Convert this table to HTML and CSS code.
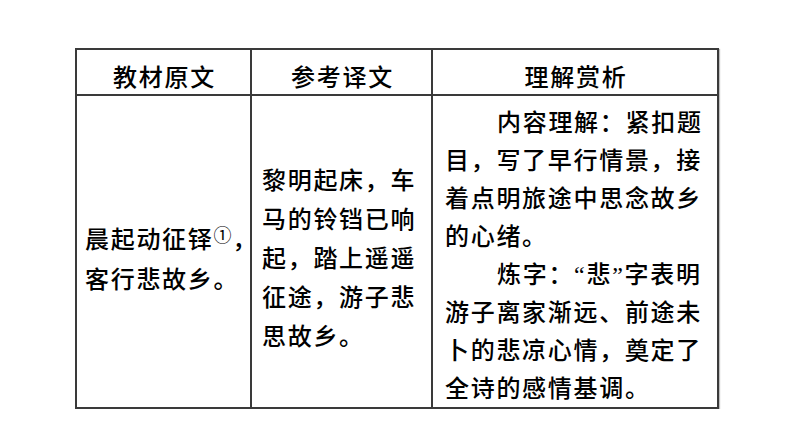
FILE: index.html
```html
<!DOCTYPE html>
<html lang="zh-CN">
<head>
<meta charset="utf-8">
<title>晨起动征铎</title>
<link rel="stylesheet" href="styles.css">
</head>
<body>
<div class="sheet">
  <div class="cell head">教材原文</div>
  <div class="cell head">参考译文</div>
  <div class="cell head">理解赏析</div>
  <div class="cell body c1"><p class="para">晨起动征铎<span class="note">①</span>，<br>客行悲故乡。</p></div>
  <div class="cell body c2"><p class="para">黎明起床，车<br>马的铃铛已响<br>起，踏上遥遥<br>征途，游子悲<br>思故乡。</p></div>
  <div class="cell body c3">
    <p class="para"><span class="ind">内容理解：紧扣题</span><br>目，写了早行情景，接<br>着点明旅途中思念故乡<br>的心绪。</p>
    <p class="para"><span class="ind">炼字：“悲”字表明</span><br>游子离家渐远、前途未<br>卜的悲凉心情，奠定了<br>全诗的感情基调。</p>
  </div>
</div>
</body>
</html>
```
FILE: styles.css
```css
html, body {
  margin: 0;
  padding: 0;
  background: #ffffff;
}

body {
  font-family: "Liberation Serif", "Noto Sans CJK SC", sans-serif;
  color: #000000;
}

.sheet {
  display: grid;
  grid-template-columns: 175px 181px 286px;
  grid-template-rows: 46px 313px;
  width: max-content;
  margin: 48px 0 0 75px;
  border-left: 2px solid #3a3a3a;
  border-top: 2px solid #3a3a3a;
  box-shadow: 1px 1px 1px rgba(0, 0, 0, 0.25);
}

.cell {
  box-sizing: border-box;
  border-right: 2px solid #3a3a3a;
  border-bottom: 2px solid #3a3a3a;
  font-size: 24px;
  font-weight: 500;
  letter-spacing: 1.7px;
  white-space: nowrap;
}

.head {
  display: flex;
  justify-content: center;
  align-items: center;
  padding-top: 11px;
  padding-left: 2px;
  line-height: 30px;
}

.body {
  display: flex;
  flex-direction: column;
  justify-content: center;
  padding-top: 16px;
}

.c1 {
  padding-left: 8px;
  line-height: 40px;
}

.c2 {
  padding-left: 10px;
  line-height: 39px;
}

.c3 {
  justify-content: flex-start;
  padding-top: 8px;
  padding-left: 12px;
  line-height: 38px;
}

.para {
  margin: 0;
}

.ind {
  padding-left: 52px;
}

.note {
  font-family: "Noto Sans CJK SC", sans-serif;
  font-size: 18px;
  font-weight: 400;
  line-height: 1;
  vertical-align: 6px;
  letter-spacing: 0;
  margin-right: 1px;
}
```
